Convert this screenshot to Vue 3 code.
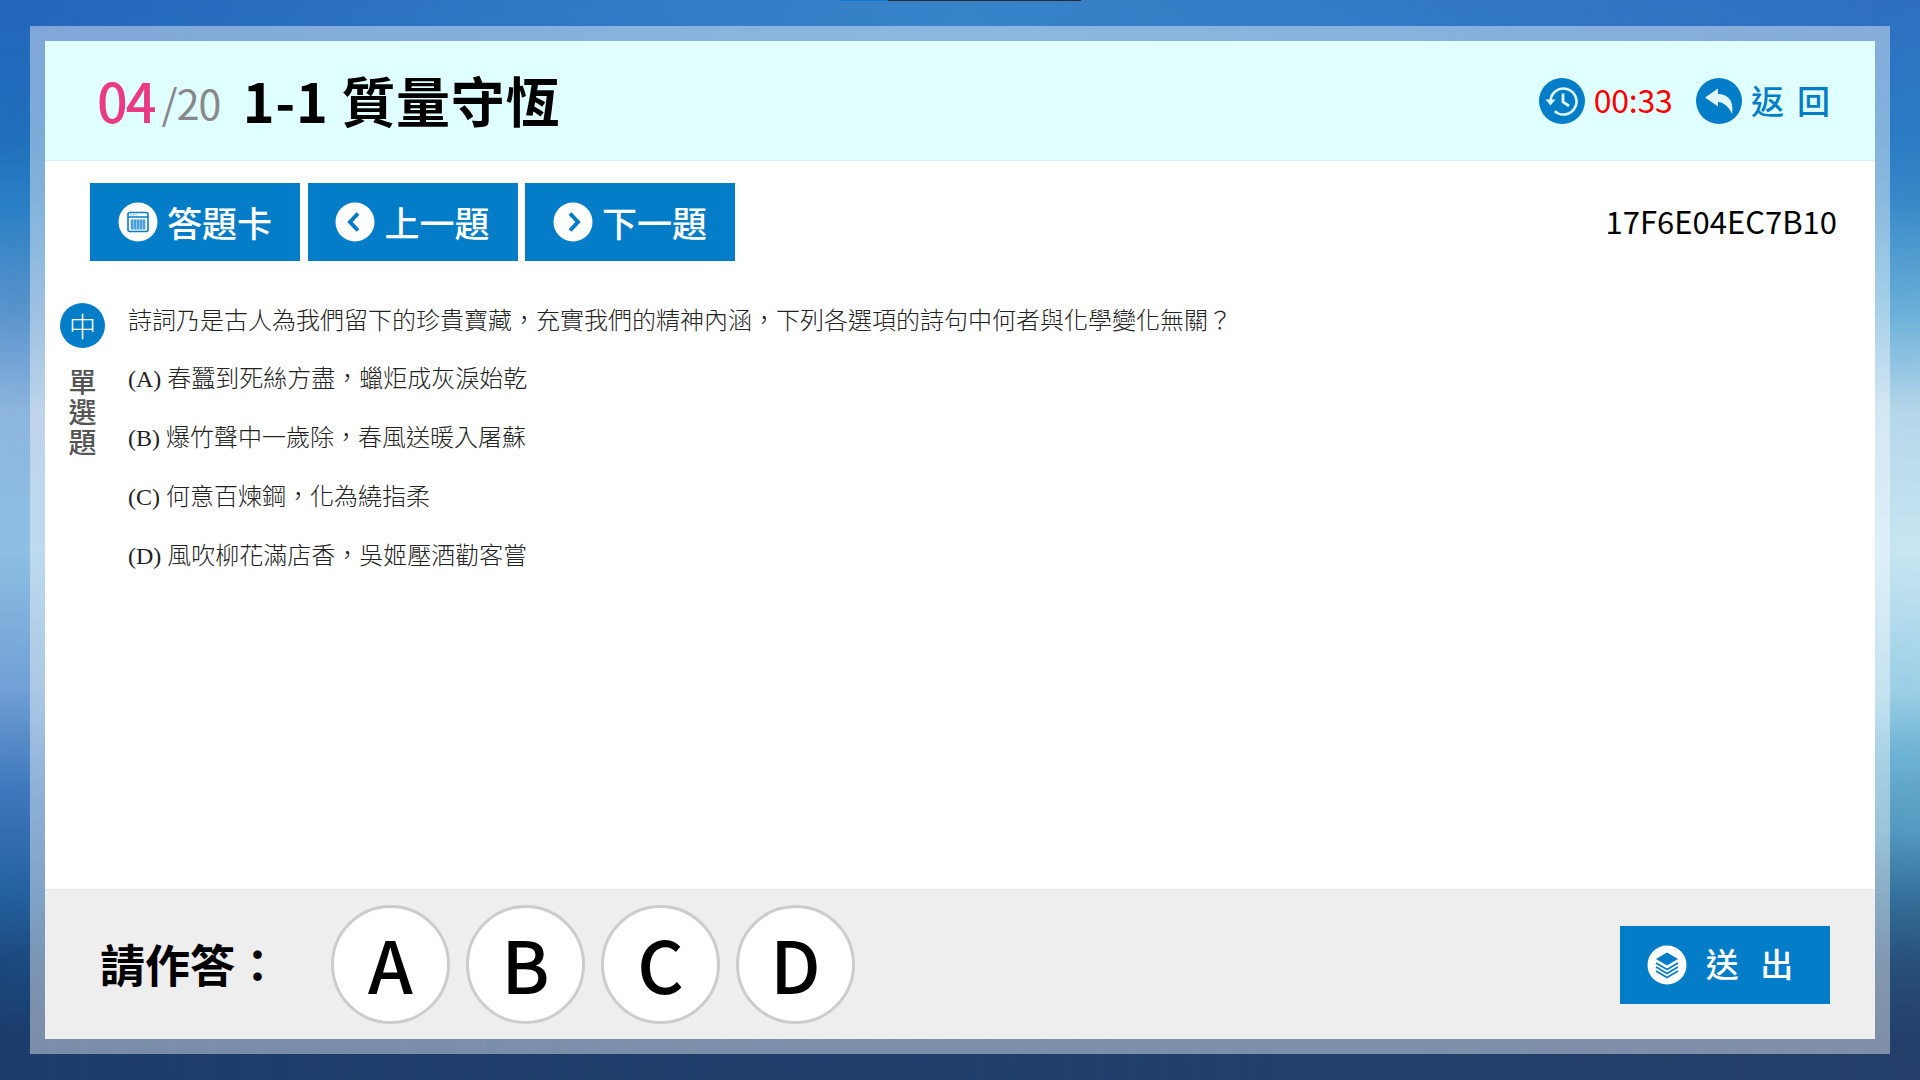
<script setup>
const options = [
  ['(A)', '春蠶到死絲方盡，蠟炬成灰淚始乾'],
  ['(B)', '爆竹聲中一歲除，春風送暖入屠蘇'],
  ['(C)', '何意百煉鋼，化為繞指柔'],
  ['(D)', '風吹柳花滿店香，吳姬壓酒勸客嘗'],
]
const answers = ['A', 'B', 'C', 'D']
</script>

<template>
  <div class="page">
    <div class="topstrip"><i class="seg-blue"></i><i class="seg-dark"></i></div>
    <div class="frame">
      <main class="panel">
        <header class="head">
          <div class="title">
            <span class="num">04</span>
            <span class="total">/20</span>
            <span class="name">1-1 質量守恆</span>
          </div>
          <div class="tools">
            <svg class="round" viewBox="0 0 46 46">
              <circle cx="23" cy="23" r="23" fill="#047dc9" />
              <path d="M11.5 23.5a13 13 0 1 1 4.2 9.6" fill="none" stroke="#e0f7fb" stroke-width="2.6" />
              <path d="M6.5 21.5h10l-5 6z" fill="#e0f7fb" />
              <path d="M24 15.5v8.5l6 4" fill="none" stroke="#e0f7fb" stroke-width="2.8" />
            </svg>
            <span class="time">00:33</span>
            <svg class="round back" viewBox="0 0 46 46">
              <circle cx="23" cy="23" r="23" fill="#047dc9" />
              <path d="M9 19.500 22 10.500V16C31 16 38.500 22 36 36 33 29 28 24.500 22 24v4.500z" fill="#e0f7fb" />
            </svg>
            <span class="back-text">返 回</span>
          </div>
        </header>

        <section class="body">
          <div class="toolbar">
            <div class="btns">
              <button class="btn">
                <svg class="ico" viewBox="0 0 40 40">
                  <circle cx="20" cy="20" r="19.500" fill="#fff" />
                  <rect x="10" y="10.500" width="20" height="19" rx="2" fill="none" stroke="#047dc9" stroke-width="1.600" />
                  <path d="M10 15h20" stroke="#047dc9" stroke-width="1.500" />
                  <path d="M12.500 12.800h1M15 12.800h1M17.500 12.800h1" stroke="#047dc9" />
                  <path d="M12.500 17.500h15v10h-15z" fill="#8fc2e6" />
                  <path d="M14 17.500v10M17 17.500v10M20 17.500v10M23 17.500v10M26 17.500v10" stroke="#047dc9" />
                </svg>
                <span class="label">答題卡</span>
              </button>
              <button class="btn">
                <svg class="ico" viewBox="0 0 40 40">
                  <circle cx="20" cy="20" r="19.500" fill="#fff" />
                  <path d="M23 11.500 15 20l8 8.500" fill="none" stroke="#047dc9" stroke-width="4" />
                </svg>
                <span class="label">上一題</span>
              </button>
              <button class="btn">
                <svg class="ico" viewBox="0 0 40 40">
                  <circle cx="20" cy="20" r="19.500" fill="#fff" />
                  <path d="M17 11.500 25 20l-8 8.500" fill="none" stroke="#047dc9" stroke-width="4" />
                </svg>
                <span class="label">下一題</span>
              </button>
            </div>
            <div class="code">17F6E04EC7B10</div>
          </div>

          <div class="question">
            <div class="side">
              <div class="level">中</div>
              <div class="kind">單選題</div>
            </div>
            <div class="content">
              <p>詩詞乃是古人為我們留下的珍貴寶藏，充實我們的精神內涵，下列各選項的詩句中何者與化學變化無關？</p>
              <p v-for="o in options" :key="o[0]">{{ o[0] }} {{ o[1] }}</p>
            </div>
          </div>
        </section>

        <footer class="foot">
          <div class="answer">
            <span class="ask">請作答：</span>
            <div class="choices">
              <div v-for="a in answers" :key="a" class="choice">{{ a }}</div>
            </div>
          </div>
          <button class="btn send">
            <svg class="ico" viewBox="0 0 40 40">
              <circle cx="20" cy="20" r="19.500" fill="#fff" />
              <path d="M20 7.500 31 14l-11 6.500L9 14z" fill="#047dc9" />
              <path d="M9 18l11 6.500L31 18M9 22l11 6.500L31 22M9 26l11 6.500L31 26" fill="none" stroke="#047dc9" stroke-width="1.800" />
            </svg>
            <span class="label">送 出</span>
          </button>
        </footer>
      </main>
    </div>
  </div>
</template>

<style>
html, body { margin: 0; padding: 0; }
</style>

<style scoped>
* { box-sizing: border-box; }
.page {
  position: relative;
  width: 1920px;
  height: 1080px;
  overflow: hidden;
  padding: 26px 30px;
  font-family: "Noto Sans CJK TC", "Noto Sans", sans-serif;
  background: linear-gradient(180deg, #2466bb 0, #2070bb 13%, #2a7fc4 19%, #5a94cc 29%, #8db5dd 38%, #8dbfe3 51%, #6f9fd4 64%, #3f78bc 73%, #24609e 83%, #1c4a7e 89%, #1c3d6d 96%, #1c3d6d 100%);
}
.page::before {
  content: "";
  position: absolute;
  inset: 0;
  background: linear-gradient(180deg, #2f6fc0 0, #2a7cc3 13%, #3a8ac8 19%, #6bb0d8 29%, #b5d6ea 38%, #c8e6f2 51%, #9ccfe5 64%, #6cb2d3 70%, #5399bf 77%, #35709a 83%, #28507a 89%, #243f6b 96%, #254069 100%);
  -webkit-mask-image: linear-gradient(90deg, transparent 0, #000 100%);
  mask-image: linear-gradient(90deg, transparent 0, #000 100%);
}
.page::after {
  content: "";
  position: absolute;
  left: 0;
  right: 0;
  top: 0;
  height: 41px;
  background: linear-gradient(90deg, rgba(60,140,205,0) 2%, rgba(60,140,205,.75) 50%, rgba(60,140,205,0) 98%);
}
.topstrip { position: absolute; top: 0; left: 840px; display: flex; height: 1px; z-index: 2; }
.seg-blue { width: 48px; background: #0a78d4; }
.seg-dark { width: 193px; background: #2b2b2b; }
.frame {
  position: relative;
  z-index: 1;
  width: 1860px;
  height: 1028px;
  padding: 15px;
  background: rgba(255,255,255,.42);
}
.panel {
  display: flex;
  flex-direction: column;
  height: 998px;
  background: #fff;
}
.head {
  height: 120px;
  flex: none;
  padding: 0 45px 0 52px;
  display: flex;
  align-items: center;
  justify-content: space-between;
  background: #e0ffff;
  border-bottom: 1px solid #dcecf8;
}
.title { padding-bottom: 2px; white-space: nowrap; }
.num { font-size: 54px; font-weight: 500; color: #ea3a85; letter-spacing: -2px; }
.total { font-size: 41px; color: #888; margin-left: 7px; letter-spacing: -1px; vertical-align: 3px; }
.name { font-size: 54px; font-weight: 700; color: #000; margin-left: 22.500px; letter-spacing: .7px; }
.tools { display: flex; align-items: center; }
.round { width: 46px; height: 46px; flex: none; }
.time { font-size: 32px; color: #f00; margin-left: 9px; padding-bottom: 3px; letter-spacing: -.2px; }
.back { margin-left: 23.5px; }
.back-text { font-size: 33px; color: #047dc9; margin-left: 9px; font-weight: 500; white-space: pre; word-spacing: 5.5px; padding-bottom: 2px; }
.body { flex: 1; min-height: 0; }
.toolbar {
  padding: 22px 38px 0 45px;
  display: flex;
  align-items: center;
  justify-content: space-between;
}
.btns { display: flex; gap: 7.5px; }
.btn {
  width: 210px;
  height: 78px;
  border: 0;
  padding: 0;
  display: flex;
  align-items: center;
  justify-content: center;
  gap: 9px;
  background: #047dc9;
  color: #fff;
  font-family: inherit;
  font-size: 35px;
  font-weight: 500;
  line-height: 1;
}
.label { padding-bottom: 2px; }
.ico { width: 40px; height: 40px; flex: none; }
.code { font-size: 31px; color: #000; line-height: 1; padding-bottom: 4px; }
.question { display: flex; padding: 42px 0 0 15px; }
.side { width: 45px; flex: none; display: flex; flex-direction: column; align-items: center; }
.level {
  width: 45px;
  height: 45px;
  border-radius: 50%;
  background: #047dc9;
  color: #fff;
  font-size: 27px;
  font-weight: 300;
  display: flex;
  align-items: center;
  justify-content: center;
  line-height: 1;
}
.kind {
  margin-top: 20px;
  writing-mode: vertical-rl;
  font-size: 28px;
  letter-spacing: 2px;
  line-height: 30px;
  font-weight: 500;
  color: #555;
}
.content {
  margin-left: 23px;
  padding-top: .5px;
  font-family: "Liberation Serif", "Noto Sans CJK TC", serif;
  font-size: 24px;
  color: #222;
  font-weight: 300;
}
.content p { margin: 0; height: 58.8px; line-height: 34px; }
.foot {
  height: 150px;
  flex: none;
  padding: 0 45px 0 55px;
  display: flex;
  align-items: center;
  justify-content: space-between;
  background: #eee;
  border-top: 1px solid #e2e8ee;
}
.answer { display: flex; align-items: center; }
.ask { width: 231px; font-size: 45px; font-weight: 700; color: #000; padding-bottom: 3px; }
.choices { display: flex; gap: 16px; }
.choice {
  width: 119px;
  height: 119px;
  border-radius: 50%;
  border: 3px solid #ccc;
  background: #fff;
  font-size: 72px;
  font-weight: 500;
  color: #000;
  display: flex;
  align-items: center;
  justify-content: center;
  line-height: 1;
  padding-bottom: 3px;
}
.send { font-size: 33px; word-spacing: 14px; white-space: pre; gap: 19px; padding-right: 10px; }
</style>
